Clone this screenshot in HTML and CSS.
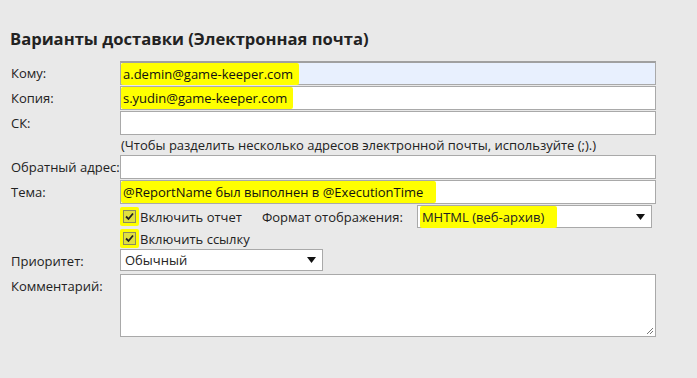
FILE: index.html
```html
<!DOCTYPE html>
<html lang="ru">
<head>
  <meta charset="UTF-8" />
  <meta name="viewport" content="width=device-width, initial-scale=1.0" />
  <title>Варианты доставки</title>
  <link rel="stylesheet" href="styles.css">
</head>
<body>
  <div class="page">
    <h2 class="title">Варианты доставки (Электронная почта)</h2>

    <div class="form">
      <label class="lbl">Кому:</label>
      <div class="field autofill first"><span class="mark">a.demin@game-keeper.com</span></div>

      <label class="lbl">Копия:</label>
      <div class="field"><span class="mark">s.yudin@game-keeper.com</span></div>

      <label class="lbl">СК:</label>
      <div class="field"></div>

      <div></div>
      <div class="hint">(Чтобы разделить несколько адресов электронной почты, используйте (;).)</div>

      <label class="lbl">Обратный адрес:</label>
      <div class="field"></div>

      <label class="lbl">Тема:</label>
      <div class="field"><span class="mark mark-long">@ReportName был выполнен в @ExecutionTime</span></div>

      <div></div>
      <div class="check-row">
        <span class="check"><span class="box"><svg width="9" height="9" viewBox="0 0 9 9"><path d="M1 4.5 L3.5 7 L8 1.5" fill="none" stroke="#222" stroke-width="1.8"/></svg></span></span>
        <span class="check-text">Включить отчет</span>
        <span class="format-lbl">Формат отображения:</span>
        <div class="select format">
          <span class="mark mark-wide">MHTML (веб-архив)</span>
          <svg class="arrow" width="9" height="6" viewBox="0 0 9 6"><path d="M0 0 H9 L4.5 6 Z" fill="#111"/></svg>
        </div>
      </div>

      <div></div>
      <div class="check-row second">
        <span class="check"><span class="box"><svg width="9" height="9" viewBox="0 0 9 9"><path d="M1 4.5 L3.5 7 L8 1.5" fill="none" stroke="#222" stroke-width="1.8"/></svg></span></span>
        <span class="check-text">Включить ссылку</span>
      </div>

      <label class="lbl">Приоритет:</label>
      <div class="prio-row">
        <div class="select prio">
          <span>Обычный</span>
          <svg class="arrow" width="9" height="6" viewBox="0 0 9 6"><path d="M0 0 H9 L4.5 6 Z" fill="#111"/></svg>
        </div>
      </div>

      <label class="lbl">Комментарий:</label>
      <div class="textarea">
        <svg class="grip" width="10" height="10" viewBox="0 0 10 10"><path d="M9 3 L3 9 M9 6 L6 9" stroke="#777" stroke-width="1"/></svg>
      </div>
    </div>
  </div>
</body>
</html>
```

FILE: styles.css
```css
* {
  box-sizing: border-box;
  padding: 0;
  margin: 0;
}

body {
  background-color: #e9e9e9;
  font-family: 'Open Sans', 'Noto Sans', sans-serif;
  font-size: 13px;
  color: #222;
}

.page {
  padding: 28px 10px 0 10px;
}

.title {
  font-size: 16.6px;
  font-weight: bold;
  line-height: 22px;
  color: #222;
  margin-bottom: 11px;
}

.form {
  display: grid;
  grid-template-columns: 110px 536px;
  row-gap: 1px;
}

.lbl {
  line-height: 24px;
  padding-left: 1px;
  white-space: nowrap;
}

.field {
  height: 24px;
  background: #fff;
  border: 1px solid #a9a9a9;
  display: flex;
  align-items: center;
  color: #111;
}

.field.first {
  border-top: 2px solid #a0a0a0;
}

.autofill {
  background: #e8f0fe;
}

.mark {
  background: #ffff00;
  padding: 2px 6px 2px 2px;
  border-radius: 2px;
  line-height: 18px;
}

.mark-long,
.mark-wide {
  padding-right: 13px;
}

.hint {
  line-height: 18px;
  padding-left: 1px;
  white-space: nowrap;
}

.check-row {
  display: flex;
  align-items: center;
  height: 23px;
}

.check-row.second {
  height: 19px;
}

.check {
  background: #ffff00;
  width: 19px;
  height: 19px;
  display: flex;
  align-items: center;
  justify-content: center;
  margin-right: 1px;
  border-radius: 2px;
}

.box {
  width: 13px;
  height: 13px;
  border: 1px solid #8a8a60;
  background: #e0e040;
  display: flex;
  align-items: center;
  justify-content: center;
}

.format-lbl {
  margin-left: 20px;
}

.select {
  background: #fff;
  border: 1px solid #a9a9a9;
  display: flex;
  align-items: center;
  justify-content: space-between;
  padding: 0 6px 0 2px;
}

.select.format {
  width: 235px;
  height: 23px;
  margin-left: 14px;
}

.select.prio {
  width: 203px;
  height: 22px;
  padding-left: 4px;
}

.textarea {
  height: 63px;
  background: #fff;
  border: 1px solid #a9a9a9;
  display: flex;
  justify-content: flex-end;
  align-items: flex-end;
}

.grip {
  margin: 0 1px 1px 0;
}
```
